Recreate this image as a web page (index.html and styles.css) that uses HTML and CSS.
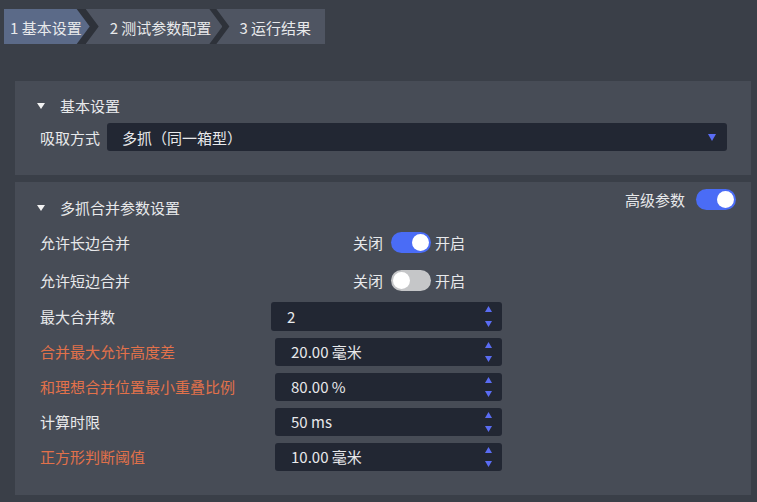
FILE: index.html
```html
<!DOCTYPE html>
<html>
<head>
  <meta charset="UTF-8">
  <title>参数配置</title>
  <link rel="stylesheet" href="styles.css">
</head>
<body>
  <div class="steps">
    <div class="step step-first active">1 基本设置</div>
    <div class="step step-mid">2 测试参数配置</div>
    <div class="step step-last">3 运行结果</div>
  </div>

  <div class="content">
    <section class="panel panel-basic">
      <div class="panel-title"><span class="caret"></span>基本设置</div>
      <div class="field">
        <span class="field-label">吸取方式</span>
        <div class="select">
          多抓（同一箱型）
          <svg class="select-arrow" width="8" height="7" viewBox="0 0 8 7"><path d="M0 0 H8 L4 7 Z" fill="#5a6cf3"/></svg>
        </div>
      </div>
    </section>

    <section class="panel panel-merge">
      <div class="panel-head">
        <div class="panel-title"><span class="caret"></span>多抓合并参数设置</div>
        <div class="adv">
          <span>高级参数</span>
          <span class="switch on"></span>
        </div>
      </div>

      <div class="switches">
        <div class="row row-switch">
          <span class="row-label">允许长边合并</span>
          <span class="switch-text">关闭</span>
          <span class="switch on"></span>
          <span class="switch-text">开启</span>
        </div>
        <div class="row row-switch">
          <span class="row-label">允许短边合并</span>
          <span class="switch-text">关闭</span>
          <span class="switch"></span>
          <span class="switch-text">开启</span>
        </div>
      </div>

      <div class="row">
        <span class="row-label">最大合并数</span>
        <div class="spin spin-wide">2
          <span class="spin-btns">
            <svg width="7" height="6" viewBox="0 0 7 6"><path d="M3.5 0 L7 6 H0 Z" fill="#5a6cf3"/></svg>
            <svg width="7" height="6" viewBox="0 0 7 6"><path d="M0 0 H7 L3.5 6 Z" fill="#5a6cf3"/></svg>
          </span>
        </div>
      </div>
      <div class="row">
        <span class="row-label warn">合并最大允许高度差</span>
        <div class="spin">20.00 毫米
          <span class="spin-btns">
            <svg width="7" height="6" viewBox="0 0 7 6"><path d="M3.5 0 L7 6 H0 Z" fill="#5a6cf3"/></svg>
            <svg width="7" height="6" viewBox="0 0 7 6"><path d="M0 0 H7 L3.5 6 Z" fill="#5a6cf3"/></svg>
          </span>
        </div>
      </div>
      <div class="row">
        <span class="row-label warn">和理想合并位置最小重叠比例</span>
        <div class="spin">80.00 %
          <span class="spin-btns">
            <svg width="7" height="6" viewBox="0 0 7 6"><path d="M3.5 0 L7 6 H0 Z" fill="#5a6cf3"/></svg>
            <svg width="7" height="6" viewBox="0 0 7 6"><path d="M0 0 H7 L3.5 6 Z" fill="#5a6cf3"/></svg>
          </span>
        </div>
      </div>
      <div class="row">
        <span class="row-label">计算时限</span>
        <div class="spin">50 ms
          <span class="spin-btns">
            <svg width="7" height="6" viewBox="0 0 7 6"><path d="M3.5 0 L7 6 H0 Z" fill="#5a6cf3"/></svg>
            <svg width="7" height="6" viewBox="0 0 7 6"><path d="M0 0 H7 L3.5 6 Z" fill="#5a6cf3"/></svg>
          </span>
        </div>
      </div>
      <div class="row">
        <span class="row-label warn">正方形判断阈值</span>
        <div class="spin">10.00 毫米
          <span class="spin-btns">
            <svg width="7" height="6" viewBox="0 0 7 6"><path d="M3.5 0 L7 6 H0 Z" fill="#5a6cf3"/></svg>
            <svg width="7" height="6" viewBox="0 0 7 6"><path d="M0 0 H7 L3.5 6 Z" fill="#5a6cf3"/></svg>
          </span>
        </div>
      </div>
    </section>
  </div>
</body>
</html>
```

FILE: styles.css
```css
body {
  margin: 0;
  background: #3a3f48;
  color: #e8e9eb;
  font-family: "Noto Sans CJK SC", "Noto Sans", sans-serif;
  font-size: 15px;
}

/* step bar */
.steps {
  display: flex;
  width: fit-content;
  height: 35px;
  margin: 9px 0 0 4px;
  background: #2e323a;
}
.step {
  height: 35px;
  line-height: 37px;
  background: #4f5562;
  white-space: nowrap;
}
.step.active {
  background: #5b6a88;
}
.step-first {
  padding: 0 8px 0 6px;
  clip-path: polygon(0 0, calc(100% - 13px) 0, 100% 50%, calc(100% - 13px) 100%, 0 100%);
}
.step-mid {
  margin-left: -4px;
  padding: 0 11px 0 24px;
  clip-path: polygon(0 0, calc(100% - 13px) 0, 100% 50%, calc(100% - 13px) 100%, 0 100%, 13px 50%);
}
.step-last {
  margin-left: -6px;
  padding: 0 14px 0 23px;
  clip-path: polygon(0 0, 100% 0, 100% 100%, 0 100%, 13px 50%);
}

/* panels */
.content {
  display: flex;
  flex-direction: column;
  gap: 7px;
  margin-top: 37px;
  padding: 0 6px 0 15px;
}
.panel {
  background: #474c56;
}
.panel-basic {
  padding: 14px 24px 24px 25px;
}
.panel-merge {
  padding: 7px 15px 21px 25px;
}
.panel-title {
  display: flex;
  align-items: center;
  height: 22px;
  line-height: 22px;
}
.caret {
  width: 0;
  height: 0;
  margin: 0 15px 0 -3px;
  border-left: 4px solid transparent;
  border-right: 4px solid transparent;
  border-top: 6px solid #f2f2f2;
}
.field {
  display: flex;
  align-items: center;
  margin-top: 6px;
}
.field-label {
  width: 67px;
  flex: none;
}
.select {
  flex: 1;
  display: flex;
  align-items: center;
  justify-content: space-between;
  height: 28px;
  padding: 0 11px 0 15px;
  background: #222733;
  border-radius: 3px;
}

.panel-head {
  display: flex;
  justify-content: space-between;
  align-items: flex-start;
}
.panel-head .panel-title {
  margin-top: 8px;
}
.adv {
  display: flex;
  align-items: center;
  gap: 11px;
}

/* switches */
.switch {
  position: relative;
  width: 40px;
  height: 21px;
  border-radius: 11px;
  background: #c5c6c8;
  flex: none;
}
.switch::after {
  content: "";
  position: absolute;
  top: 2px;
  left: 2px;
  width: 17px;
  height: 17px;
  border-radius: 50%;
  background: #ffffff;
}
.switch.on {
  background: #4a6cf6;
}
.switch.on::after {
  left: 21px;
}

/* rows */
.switches {
  margin-top: 4px;
}
.row {
  display: flex;
  align-items: center;
  height: 35px;
}
.row-switch {
  height: 38px;
}
.row-label {
  width: 235px;
  flex: none;
}
.row-switch .row-label {
  width: 313px;
}
.switch-text + .switch {
  margin: 0 4px 0 8px;
}
.warn {
  color: #e2714a;
}
.spin {
  position: relative;
  display: flex;
  align-items: center;
  width: 227px;
  height: 28px;
  padding-left: 16px;
  box-sizing: border-box;
  background: #222733;
  border-radius: 3px;
}
.spin-wide {
  width: 231px;
  margin-left: -4px;
  height: 29px;
}
.spin-btns {
  position: absolute;
  right: 10px;
  top: 4px;
  bottom: 4px;
  display: flex;
  flex-direction: column;
  justify-content: space-between;
}
.spin-btns svg {
  display: block;
}
```
